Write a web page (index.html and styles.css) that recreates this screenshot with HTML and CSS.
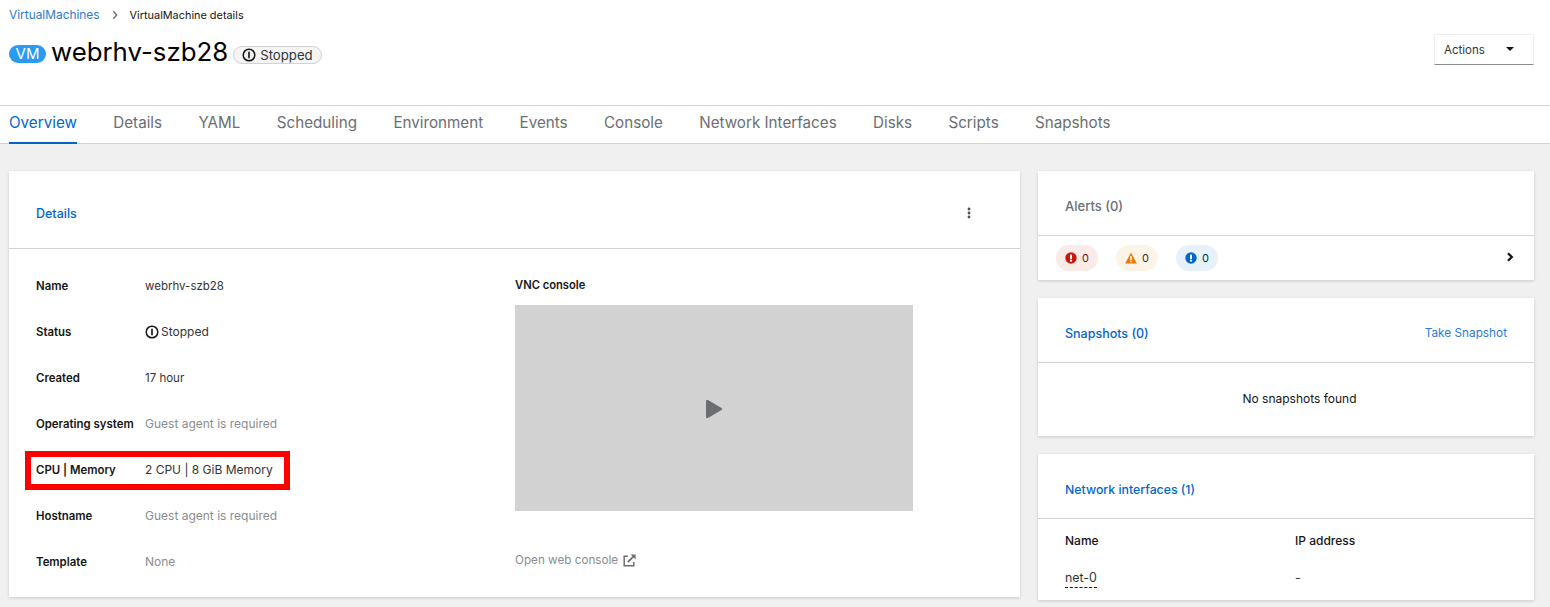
FILE: index.html
```html
<!DOCTYPE html>
<html lang="en">
<head>
  <meta charset="UTF-8" />
  <title>webrhv-szb28 · VirtualMachine details</title>
  <link rel="stylesheet" href="styles.css">
</head>
<body>

  <header class="page-header">
    <nav class="breadcrumb">
      <a href="#">VirtualMachines</a>
      <svg class="crumb-arrow" viewBox="0 0 8 12"><path d="M2 1.5 6 6l-4 4.5" fill="none" stroke="#6a6e73" stroke-width="1.6"/></svg>
      <span>VirtualMachine details</span>
    </nav>
    <div class="title-row">
      <div class="title-left">
        <span class="vm-badge">VM</span>
        <h1>webrhv-szb28</h1>
        <span class="status-pill">
          <svg class="stop-icon" viewBox="0 0 14 14"><circle cx="7" cy="7" r="5.8" fill="none" stroke="#151515" stroke-width="1.5"/><rect x="6.2" y="3.7" width="1.6" height="6.6" fill="#151515"/></svg>
          Stopped
        </span>
      </div>
      <button class="actions">Actions <span class="caret"></span></button>
    </div>
  </header>

  <nav class="tabs">
    <a class="tab active" href="#">Overview</a>
    <a class="tab" href="#">Details</a>
    <a class="tab" href="#">YAML</a>
    <a class="tab" href="#">Scheduling</a>
    <a class="tab" href="#">Environment</a>
    <a class="tab" href="#">Events</a>
    <a class="tab" href="#">Console</a>
    <a class="tab" href="#">Network Interfaces</a>
    <a class="tab" href="#">Disks</a>
    <a class="tab" href="#">Scripts</a>
    <a class="tab" href="#">Snapshots</a>
  </nav>

  <main class="overview">
    <section class="card details-card">
      <div class="card-head details-head">
        <a class="card-title" href="#">Details</a>
        <svg class="kebab" viewBox="0 0 4 12"><circle cx="2" cy="2" r="1.4"/><circle cx="2" cy="6" r="1.4"/><circle cx="2" cy="10" r="1.4"/></svg>
      </div>
      <div class="details-body">
        <dl class="props">
          <div class="prop"><dt>Name</dt><dd class="tight">webrhv-szb28</dd></div>
          <div class="prop"><dt>Status</dt><dd class="with-icon">
            <svg class="stop-icon" viewBox="0 0 14 14"><circle cx="7" cy="7" r="5.8" fill="none" stroke="#151515" stroke-width="1.5"/><rect x="6.2" y="3.7" width="1.6" height="6.6" fill="#151515"/></svg>
            Stopped</dd></div>
          <div class="prop"><dt>Created</dt><dd class="tight">17 hour</dd></div>
          <div class="prop"><dt>Operating system</dt><dd class="muted">Guest agent is required</dd></div>
          <div class="prop highlighted"><dt>CPU | Memory</dt><dd>2 CPU | 8 GiB Memory</dd></div>
          <div class="prop"><dt>Hostname</dt><dd class="muted">Guest agent is required</dd></div>
          <div class="prop last"><dt>Template</dt><dd class="muted">None</dd></div>
        </dl>
        <div class="vnc">
          <div class="vnc-label">VNC console</div>
          <div class="vnc-screen">
            <svg class="play" viewBox="0 0 18 20"><path d="M1 2.2C1 1 2 .6 3 1.1l13.500 7.800c1 .6 1 1.600 0 2.200L3 18.900c-1 .5-2 .1-2-1.100z" fill="#6a6e73"/></svg>
          </div>
          <a class="vnc-link" href="#">Open web console
            <svg class="ext-icon" viewBox="0 0 13 13"><path d="M5 2.2H1.200v9.600h9.600V8" fill="none" stroke="#6a6e73" stroke-width="1.5"/><path d="M4.800 8.200 10.600 2.400" fill="none" stroke="#6a6e73" stroke-width="1.8"/><path d="M7.600 .6h5v5z" fill="#6a6e73"/></svg>
          </a>
        </div>
      </div>
    </section>

    <div class="side">
      <section class="card alerts-card">
        <div class="card-head side-head">
          <span class="alerts-title">Alerts (0)</span>
        </div>
        <div class="alerts-row">
          <span class="alert-pill red">
            <svg viewBox="0 0 12 12"><circle cx="6" cy="6" r="5.7" fill="#c9190b"/><rect x="5" y="2.5" width="2" height="4.5" rx=".6" fill="#fff"/><circle cx="6" cy="8.7" r="1.1" fill="#fff"/></svg>
            0
          </span>
          <span class="alert-pill orange">
            <svg viewBox="0 0 12 12"><path d="M6 .6 11.900 11.400H.1z" fill="#ec7a08"/><rect x="5.2" y="4.2" width="1.6" height="3.8" fill="#fff"/><rect x="5.2" y="8.7" width="1.6" height="1.5" fill="#fff"/></svg>
            0
          </span>
          <span class="alert-pill blue">
            <svg viewBox="0 0 12 12"><circle cx="6" cy="6" r="5.7" fill="#06c"/><rect x="5" y="2.5" width="2" height="4.5" rx=".6" fill="#fff"/><circle cx="6" cy="8.7" r="1.1" fill="#fff"/></svg>
            0
          </span>
          <svg class="chevron" viewBox="0 0 8 10"><path d="M2 1.200 5.800 5 2 8.800" fill="none" stroke="#151515" stroke-width="2.3"/></svg>
        </div>
      </section>

      <section class="card snapshots-card">
        <div class="card-head side-head">
          <a class="card-title" href="#">Snapshots (0)</a>
          <a class="take-snapshot" href="#">Take Snapshot</a>
        </div>
        <div class="empty">No snapshots found</div>
      </section>

      <section class="card network-card">
        <div class="card-head side-head">
          <a class="card-title" href="#">Network interfaces (1)</a>
        </div>
        <div class="net-grid">
          <div class="net-th">Name</div>
          <div class="net-th">IP address</div>
          <div class="net-td"><span class="dashed">net-0</span></div>
          <div class="net-td">-</div>
        </div>
      </section>
    </div>
  </main>

</body>
</html>
```

FILE: styles.css
```css
html, body {
  height: 607px;
  overflow: hidden;
}

body {
  font-family: 'Inter', 'Noto Sans', sans-serif;
  font-size: 11.5px;
  color: #151515;
  background: #f0f0f0;
  margin: 0;
  padding: 0;
}

a {
  color: #06c;
  text-decoration: none;
}

.page-header {
  background: #fff;
  height: 105px;
  padding: 8px 16px 0 9px;
  box-sizing: border-box;
}

.breadcrumb {
  display: flex;
  align-items: center;
  height: 13px;
  font-size: 10.9px;
}

.breadcrumb a {
  color: #2b7bd6;
  font-size: 11.9px;
}

.crumb-arrow {
  width: 8px;
  height: 10px;
  margin: 0 11px 0 11px;
}

.title-row {
  display: flex;
  justify-content: space-between;
  align-items: flex-start;
  margin-top: 13px;
}

.title-left {
  display: flex;
  align-items: center;
  height: 34px;
}

.vm-badge {
  background: #2b9af3;
  color: #fff;
  font-size: 15px;
  width: 37px;
  height: 18px;
  line-height: 18px;
  border-radius: 9px;
  text-align: center;
  margin: 6px 5px 0 0;
}

h1 {
  font-weight: 400;
  font-size: 25.8px;
  margin: 0 5px 0 0;
  color: #000;
}

.status-pill {
  display: flex;
  align-items: center;
  gap: 4px;
  height: 16px;
  margin-top: 8px;
  padding: 0 8px;
  background: #f5f5f5;
  border: 1px solid #d2d2d2;
  border-radius: 9px;
  font-size: 13.2px;
  color: #333;
}

.stop-icon {
  width: 14px;
  height: 14px;
}

.actions {
  width: 100px;
  height: 31px;
  font: inherit;
  color: #333;
  text-align: left;
  padding: 0 0 0 9px;
  background: #fff;
  border: 1px solid #eee;
  border-bottom: 1px solid #8a8d90;
  position: relative;
}

.caret {
  position: absolute;
  right: 19px;
  top: 12px;
  border-left: 4.5px solid transparent;
  border-right: 4.5px solid transparent;
  border-top: 4.5px solid #151515;
}

.tabs {
  display: flex;
  gap: 36.4px;
  height: 37px;
  background: #fff;
  padding-left: 9px;
  border-top: 1px solid #d2d2d2;
  border-bottom: 1px solid #d2d2d2;
}

.tab {
  color: #6a6e73;
  font-size: 15.2px;
  line-height: 33px;
  height: 38px;
  box-sizing: border-box;
}

.tab.active {
  color: #06c;
  border-bottom: 2px solid #06c;
}

.overview {
  display: grid;
  grid-template-columns: 1011px 496px;
  gap: 18px;
  padding: 27px 16px 0 9px;
}

.card {
  background: #fff;
  box-shadow: 0 1px 3px rgba(0, 0, 0, 0.16);
}

.card-head {
  display: flex;
  justify-content: space-between;
  align-items: center;
  border-bottom: 1px solid #d2d2d2;
  box-sizing: border-box;
}

.card-title {
  font-weight: 500;
  font-size: 12.5px;
}

.details-card {
  height: 426px;
}

.details-head {
  height: 78px;
  padding: 15px 49px 8px 27px;
}

.kebab {
  width: 4px;
  height: 12px;
  fill: #4f5255;
}

.details-body {
  display: flex;
  padding: 0 27px;
}

.props {
  width: 479px;
  margin: 14px 0 0;
}

.prop {
  display: flex;
  align-items: center;
  height: 46px;
  position: relative;
}

.prop.last {
  height: 45px;
}

.prop dt {
  width: 109px;
  font-weight: 600;
  font-size: 11.4px;
}

.prop dd {
  margin: -1px 0 0;
  color: #333;
  font-size: 12px;
}

.prop dd.tight {
  margin-top: 0;
  font-size: 11.5px;
}

.prop dd.muted {
  color: #8a8d90;
}

.with-icon {
  display: flex;
  align-items: center;
  gap: 2px;
}

.highlighted::before {
  content: "";
  position: absolute;
  left: -11px;
  top: 4px;
  width: 253px;
  height: 27px;
  border: 6px solid #f00;
}

.vnc {
  width: 398px;
  padding-top: 29px;
}

.vnc-label {
  font-weight: 600;
  font-size: 11.2px;
  height: 14px;
}

.vnc-screen {
  height: 206px;
  margin-top: 13px;
  background: #d2d2d2;
  display: flex;
  align-items: center;
  justify-content: center;
}

.play {
  width: 18px;
  height: 20px;
  margin: 1px 1px 0 0;
}

.vnc-link {
  display: flex;
  align-items: center;
  gap: 5px;
  margin-top: 42px;
  color: #8a8d90;
  font-size: 11.7px;
}

.ext-icon {
  width: 13px;
  height: 13px;
}

.side {
  display: flex;
  flex-direction: column;
  gap: 18px;
}

.side-head {
  height: 65px;
  padding: 6px 27px 0;
}

.alerts-title {
  color: #6a6e73;
  font-size: 13px;
  font-weight: 500;
}

.alerts-row {
  display: flex;
  align-items: center;
  gap: 18px;
  height: 44px;
  padding: 0 20px 0 18px;
  font-size: 11px;
}

.alert-pill {
  display: flex;
  align-items: center;
  gap: 5px;
  height: 26px;
  padding: 0 9px;
  border-radius: 13px;
}

.alert-pill svg {
  width: 12px;
  height: 12px;
}

.alert-pill.red {
  background: #faeae8;
  color: #7d1007;
}

.alert-pill.orange {
  background: #fdf4e8;
  color: #3b2a1a;
}

.alert-pill.blue {
  background: #e7f1fa;
  color: #002952;
}

.chevron {
  width: 8px;
  height: 10px;
  margin: -2px 0 0 auto;
}

.take-snapshot {
  color: #2b7bd6;
  font-size: 11.8px;
}

.empty {
  height: 73px;
  box-sizing: border-box;
  display: flex;
  align-items: center;
  justify-content: center;
  padding: 0 0 2px 27px;
  font-size: 12px;
}

.network-card {
  height: 146px;
}

.network-card .card-title {
  font-size: 12.3px;
}

.net-grid {
  display: grid;
  grid-template-columns: 230px 1fr;
  padding: 14px 27px 0;
  row-gap: 22px;
}

.net-th {
  font-weight: 500;
  font-size: 12px;
}

.net-td {
  color: #333;
  font-size: 12.4px;
}

.dashed {
  border-bottom: 1px dashed #151515;
  padding-bottom: 2px;
}
```
